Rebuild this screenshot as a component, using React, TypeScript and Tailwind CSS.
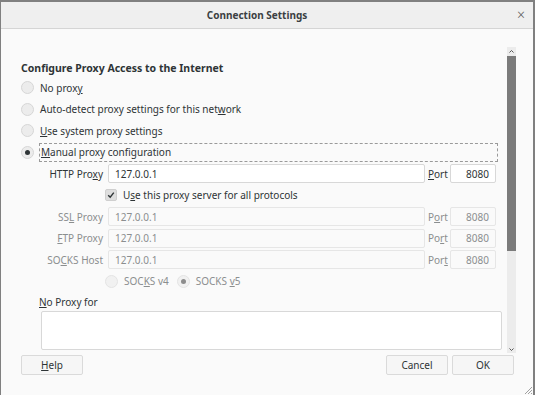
import type { ReactNode } from 'react'

function Radio({ checked = false, disabled = false }: { checked?: boolean; disabled?: boolean }) {
  return (
    <span
      className={`flex h-[13px] w-[13px] shrink-0 items-center justify-center rounded-full border ${
        disabled ? 'border-[#e4e4e4] bg-[#f1f1f1]' : 'border-[#d6d6d6] bg-[#ececec]'
      } ${checked && disabled ? 'bg-[#e2e2e2]' : ''}`}
    >
      {checked && (
        <span className={`h-[5px] w-[5px] rounded-full ${disabled ? 'bg-[#8d8d8d]' : 'bg-[#2e3436]'}`} />
      )}
    </span>
  )
}

function Field({ value, disabled = false, className = '' }: { value: string; disabled?: boolean; className?: string }) {
  return (
    <div
      className={`flex h-[19px] items-center rounded-[2px] border px-[6px] ${
        disabled ? 'border-[#e6e6e6] bg-[#fafafa] text-[#8b8e8f]' : 'border-[#d8d8d8] bg-white text-[#2e3436]'
      } ${className}`}
    >
      {value}
    </div>
  )
}

function ProxyRow({ label, value, port, disabled = false }: { label: ReactNode; value: string; port: ReactNode; disabled?: boolean }) {
  return (
    <div className={`flex h-[21.5px] items-center ${disabled ? 'text-[#8b8e8f]' : 'text-[#2e3436]'}`}>
      <div className="w-[103px] pr-[1px] text-right">{label}</div>
      <Field value={value} disabled={disabled} className="ml-[4px] w-[317px]" />
      <div className="ml-[3px] w-[22px]">{port}</div>
      <Field value="8080" disabled={disabled} className="w-[46px] justify-end" />
    </div>
  )
}

function Btn({ children, className = '' }: { children: ReactNode; className?: string }) {
  return (
    <div
      className={`flex h-[20px] w-[62px] items-center justify-center rounded-[2px] border border-[#dadada] bg-[#f6f6f6] text-[#2e3436] ${className}`}
    >
      {children}
    </div>
  )
}

export default function App() {
  return (
    <div className="h-[395px] w-[535px] overflow-hidden bg-[#808080] pl-[1px] pr-[2px] pt-[2px] font-['Noto_Sans',sans-serif] text-[10px] leading-none">
      <div className="flex h-[393px] flex-col bg-[#fafafa]">
        {/* Title bar */}
        <div className="relative flex h-[27px] shrink-0 items-center justify-center border-b border-[#d5d5d5] bg-[#efefef]">
          <span className="ml-[-20px] text-[10px] font-bold text-[#3b3f42]">Connection Settings</span>
          <span className="absolute right-[8px] top-[6px] text-[14px] font-light text-[#555]">×</span>
        </div>

        {/* Scroll area */}
        <div className="flex h-[324px] shrink-0">
          <div className="w-[506px] pl-[20px] pt-[31px] text-[#2e3436]">
            <div className="flex h-[16px] items-center text-[10.5px] font-bold">Configure Proxy Access to the Internet</div>
            <div className="mt-[1px] flex h-[21.5px] items-center gap-[6px]">
              <Radio />
              <span>
                No prox<u>y</u>
              </span>
            </div>
            <div className="flex h-[21.5px] items-center gap-[6px]">
              <Radio />
              <span>
                Auto-detect proxy settings for this net<u>w</u>ork
              </span>
            </div>
            <div className="flex h-[21.5px] items-center gap-[6px]">
              <Radio />
              <span>
                <u>U</u>se system proxy settings
              </span>
            </div>
            <div className="flex h-[21.5px] items-center gap-[5px]">
              <Radio checked />
              <div className="flex h-[19px] w-[459px] items-center border border-dashed border-[#9a9a9a] pl-[1px]">
                <u>M</u>anual proxy configuration
              </div>
            </div>

            <div className="ml-[-20px]">
              <ProxyRow
                label={
                  <>
                    HTTP Pro<u>x</u>y
                  </>
                }
                value="127.0.0.1"
                port={
                  <>
                    <u>P</u>ort
                  </>
                }
              />
              <div className="flex h-[21.5px] items-center pl-[104px]">
                <span className="flex h-[12px] w-[12px] items-center justify-center rounded-[2px] border border-[#cfcfcf] bg-[#dedede]">
                  <svg width="8" height="8" viewBox="0 0 8 8">
                    <path d="M1.2 4.2 L3.2 6.2 L6.8 1.6" fill="none" stroke="#2e3436" strokeWidth="1.4" />
                  </svg>
                </span>
                <span className="ml-[6px]">
                  U<u>s</u>e this proxy server for all protocols
                </span>
              </div>
              <ProxyRow
                disabled
                label={
                  <>
                    SS<u>L</u> Proxy
                  </>
                }
                value="127.0.0.1"
                port={
                  <>
                    P<u>o</u>rt
                  </>
                }
              />
              <ProxyRow
                disabled
                label={
                  <>
                    <u>F</u>TP Proxy
                  </>
                }
                value="127.0.0.1"
                port={
                  <>
                    Po<u>r</u>t
                  </>
                }
              />
              <ProxyRow
                disabled
                label={
                  <>
                    SO<u>C</u>KS Host
                  </>
                }
                value="127.0.0.1"
                port={
                  <>
                    Por<u>t</u>
                  </>
                }
              />
              <div className="flex h-[21.5px] items-center pl-[104px] text-[#8b8e8f]">
                <Radio disabled />
                <span className="ml-[6px]">
                  SOC<u>K</u>S v4
                </span>
                <span className="ml-[8px]">
                  <Radio disabled checked />
                </span>
                <span className="ml-[6px]">
                  SOCKS <u>v</u>5
                </span>
              </div>
            </div>

            <div className="flex h-[19px] items-center pl-[18px]">
              <u>N</u>o Proxy for
            </div>
            <div className="ml-[20px] h-[39px] w-[461px] rounded-[2px] border border-[#d8d8d8] bg-white" />
          </div>

          {/* Scrollbar */}
          <div className="mt-[18px] flex h-[306px] w-[9px] flex-col bg-[#ececec]">
            <div className="flex h-[9px] items-center justify-center">
              <svg width="5" height="3" viewBox="0 0 5 3">
                <path d="M0.5 2.5 L2.5 0.5 L4.5 2.5" fill="none" stroke="#555" strokeWidth="1" />
              </svg>
            </div>
            <div className="h-[195px] bg-[#7b7b7b]" />
            <div className="flex-1" />
            <div className="flex h-[8px] items-center justify-center">
              <svg width="5" height="3" viewBox="0 0 5 3">
                <path d="M0.5 0.5 L2.5 2.5 L4.5 0.5" fill="none" stroke="#555" strokeWidth="1" />
              </svg>
            </div>
          </div>
        </div>

        {/* Buttons */}
        <div className="relative flex flex-1 items-start pl-[20px] pr-[19px] pt-[2px]">
          <Btn>
            <span>
              <u>H</u>elp
            </span>
          </Btn>
          <div className="flex-1" />
          <Btn>Cancel</Btn>
          <Btn className="ml-[4px]">OK</Btn>
          <svg className="absolute bottom-0 right-0" width="10" height="10" viewBox="0 0 10 10">
            <path d="M9 2 L2 9 M9 5 L5 9 M9 8 L8 9" stroke="#a0a0a0" strokeWidth="1" />
          </svg>
        </div>
      </div>
    </div>
  )
}
